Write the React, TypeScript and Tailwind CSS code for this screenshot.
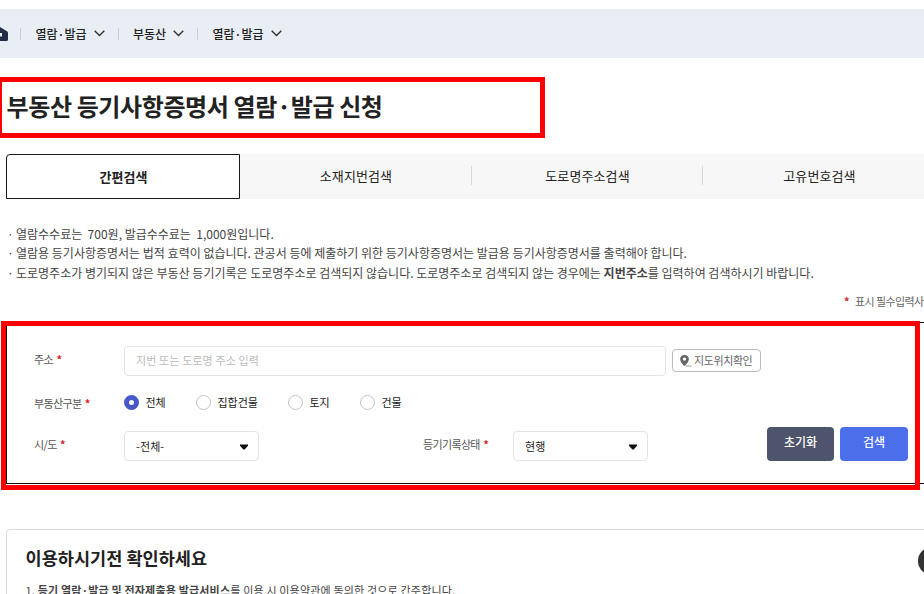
import type { ReactNode } from "react";

const crumbs = ["열람·발급", "부동산", "열람·발급"];
const crumbStyles = ["w-[97.5px]", "w-[79.5px]", "w-[90px]"];

const tabs = [
  { name: "소재지번검색", width: "w-[232px]" },
  { name: "도로명주소검색", width: "w-[231px]" },
  { name: "고유번호검색", width: "w-[233px]" },
];

const kinds = [
  { name: "전체", width: "w-[72px]" },
  { name: "집합건물", width: "w-[92px]" },
  { name: "토지", width: "w-[72px]" },
  { name: "건물", width: "w-[72px]" },
];

const Chevron = () => (
  <svg className="ml-[7px] shrink-0" width="11" height="7" viewBox="0 0 11 7" fill="none">
    <path d="M0.7 0.8 L5.5 5.6 L10.3 0.8" stroke="#333" strokeWidth="1.4" />
  </svg>
);

const Label = ({ children, className }: { children: ReactNode; className: string }) => (
  <div className={`flex shrink-0 text-[11px] leading-4 tracking-[-0.65px] text-[#555] ${className}`}>
    {children}
    <span className="ml-[3.5px] font-bold text-[#d1232a]">*</span>
  </div>
);

const Select = ({ value }: { value: string }) => (
  <div className="flex h-[30px] w-[135px] shrink-0 items-center justify-between rounded-[4px] border border-[#e4e4e4] pr-[10px] pl-[11px] text-[11px] text-[#222]">
    <span className="tracking-[0.1px]">{value}</span>
    <svg className="mt-px" width="8" height="6" viewBox="0 0 8 6">
      <path d="M0 0.5 H8 V1.8 L4.7 5.5 H3.3 L0 1.8 Z" fill="#111" />
    </svg>
  </div>
);

const App = () => {
  return (
    <div className="relative h-[594px] w-[924px] overflow-hidden bg-white pt-[9px] font-['Noto_Sans_CJK_KR',sans-serif] whitespace-nowrap text-[#222]">
      <nav className="flex h-[49px] items-center bg-[#e9edf4] text-[12px] font-medium">
        <svg className="shrink-0" width="20" height="14" viewBox="0 0 20 14">
          <path d="M0 0 L7 4.2 Q8 5 8 6 V12.5 Q8 14 6.5 14 H0 Z" fill="#232c47" />
          <path d="M0 6 H2 V9.5 H0 Z" fill="#e9edf4" />
        </svg>
        {crumbs.map((name, i) => (
          <div key={i} className={`flex shrink-0 items-center ${crumbStyles[i]}`}>
            <span className="mr-[14.5px] h-3 w-px bg-[#c9cedb]" />
            {name}
            <Chevron />
          </div>
        ))}
      </nav>

      <h1 className="mt-[30px] ml-[6.5px] h-9 text-[24px] leading-9 font-bold tracking-[-0.39px]">부동산 등기사항증명서 열람·발급 신청</h1>

      <div className="mt-[30px] ml-[6px] flex h-[45px] w-[928px] bg-[#f7f7f7] text-[13px]">
        <div className="flex w-[234px] shrink-0 items-center justify-center rounded-tl-[4px] border border-[#1a1a1a] bg-white font-bold">
          <span className="pl-px tracking-[0.1px]">간편검색</span>
        </div>
        {tabs.map((tab) => (
          <div key={tab.name} className={`flex shrink-0 items-center pb-[2px] ${tab.width}`}>
            <span className="flex-1 pl-px text-center tracking-[0.1px]">{tab.name}</span>
            <span className="h-[19px] w-px bg-[#d9d9d9]" />
          </div>
        ))}
      </div>

      <ul className="mt-[25px] ml-[7px] text-[12px] leading-[19.5px] text-[#444]">
        <li className="flex whitespace-pre"><span className="w-[9px]">·</span>열람수수료는  700원, 발급수수료는  1,000원입니다.</li>
        <li className="-mt-px mb-px flex"><span className="w-[9px]">·</span>열람용 등기사항증명서는 법적 효력이 없습니다. 관공서 등에 제출하기 위한 등기사항증명서는 발급용 등기사항증명서를 출력해야 합니다.</li>
        <li className="flex">
          <span className="w-[9px]">·</span>
          <p>도로명주소가 병기되지 않은 부동산 등기기록은 도로명주소로 검색되지 않습니다. 도로명주소로 검색되지 않는 경우에는 <b>지번주소</b>를 입력하여 검색하시기 바랍니다.</p>
        </li>
      </ul>

      <div className="mt-[10px] ml-[844px] flex h-4 text-[11px] leading-4 tracking-[-0.6px] text-[#666]">
        <span className="mr-[6px] font-bold text-[#d1232a]">*</span>
        표시 필수입력사항
      </div>

      <section className="mt-[13.5px] ml-[6px] h-[162px] w-[928px] border border-[#111] pt-[23px] pl-[27px]">
        <div className="flex h-[30px] items-center">
          <Label className="mb-1 w-[90px]">주소</Label>
          <div className="flex h-[30px] w-[542px] items-center rounded-[4px] border border-[#e4e4e4] pb-[2px] pl-[11px] text-[11px] tracking-[0.12px] text-[#bbb]">
            지번 또는 도로명 주소 입력
          </div>
          <button className="mb-px ml-[6px] flex h-[23px] w-[89px] items-center rounded-[4px] border border-[#bbb] pl-[6px] text-[11px] tracking-[-0.4px] text-[#666]">
            <svg className="mr-[2px]" width="13" height="13" viewBox="0 0 13 13">
              <path fillRule="evenodd" d="M5.5 1 C8.3 1 9.9 2.8 9.9 5.2 C9.9 8 5.5 12 5.5 12 C5.5 12 1.1 8 1.1 5.2 C1.1 2.8 2.7 1 5.5 1 Z M5.5 3.4 A1.7 1.7 0 1 0 5.5 6.8 A1.7 1.7 0 1 0 5.5 3.4 Z" fill="#666" />
              <path d="M6.5 12 H12.5" stroke="#999" />
            </svg>
            지도위치확인
          </button>
        </div>

        <div className="mt-[18px] flex h-[17px] items-center">
          <Label className="w-[90px]">부동산구분</Label>
          {kinds.map((kind, i) => (
            <div key={kind.name} className={`flex shrink-0 items-center text-[11px] text-[#222] ${kind.width}`}>
              {i === 0 ? (
                <span className="mr-[6.5px] size-[15px] rounded-full border-[5px] border-[#4759c9] bg-white" />
              ) : (
                <span className="mr-[6.5px] size-[15px] rounded-full border border-[#c4c4c4]" />
              )}
              {kind.name}
            </div>
          ))}
        </div>

        <div className="mt-4 flex h-[34px] items-end">
          <Label className="mb-[9px] w-[90px]">시/도</Label>
          <Select value="-전체-" />
          <Label className="mb-[9px] ml-[164px] w-[90px]">등기기록상태</Label>
          <Select value="현행" />
          <button className="ml-[119px] h-[34px] w-[67px] rounded-[4px] bg-[#4e546c] pb-1 text-[12px] font-medium text-white">초기화</button>
          <button className="ml-[6px] h-[34px] w-[68px] rounded-[4px] bg-[#4b6eeb] pb-1 text-[12px] font-medium text-white">검색</button>
        </div>
      </section>

      <section className="mt-[45px] ml-[6px] h-[100px] w-[928px] rounded-[4px] border border-[#ddd] pt-[15px] pl-[18.5px]">
        <h2 className="text-[17.5px] leading-[26px] font-bold tracking-[0.05px]">이용하시기전 확인하세요</h2>
        <p className="mt-[11px] text-[11px] leading-4 tracking-[0.18px] text-[#444]">
          <span>1.</span> <b>등기 열람·발급 및 전자제출용 발급서비스</b>를 이용 시 이용약관에 동의한 것으로 간주합니다.
        </p>
      </section>

      {/* floating button, cut by the right edge */}
      <div className="absolute top-[547px] left-[918px] size-7 rounded-full bg-[#333]" />

      {/* red highlight frames */}
      <div className="absolute top-[77px] -left-[3px] h-[61px] w-[548px] border-5 border-[#f00]" />
      <div className="absolute top-[321px] left-[1px] h-[169px] w-[919px] border-5 border-[#f00]" />
    </div>
  );
};

export default App;
